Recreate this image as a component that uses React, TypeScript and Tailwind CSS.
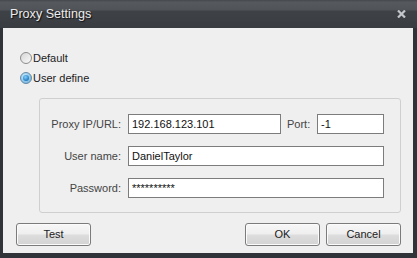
import React from "react";

// ── Radio ───────────────────────────────────────────────────────────────────

function Radio({ checked }: { checked: boolean }) {
  return (
    <svg width={12} height={12} viewBox="0 0 12 12" className="shrink-0">
      <defs>
        <linearGradient id="rOff" x1="0" y1="0" x2="1" y2="1">
          <stop offset="0" stopColor="#d4d4d4" />
          <stop offset="1" stopColor="#fbfbfb" />
        </linearGradient>
        <radialGradient id="rOn" cx="0.4" cy="0.35" r="0.7">
          <stop offset="0" stopColor="#c9ecff" />
          <stop offset="1" stopColor="#6fb3e0" />
        </radialGradient>
        <radialGradient id="rDot" cx="0.4" cy="0.35" r="0.7">
          <stop offset="0" stopColor="#7fd0ff" />
          <stop offset="1" stopColor="#1d6fb3" />
        </radialGradient>
      </defs>
      <circle cx="6" cy="6" r="5.5" fill={checked ? "url(#rOn)" : "url(#rOff)"} stroke={checked ? "#6a8aa2" : "#8c8c8c"} />
      {checked && <circle cx="6" cy="6" r="3" fill="url(#rDot)" />}
    </svg>
  );
}

// ── Button ──────────────────────────────────────────────────────────────────

function Btn({ label }: { label: string }) {
  return (
    <button className="w-[75px] h-[23px] rounded-[3px] border border-[#7b7b7b] bg-[linear-gradient(to_bottom,#f7f7f7_0%,#efefef_45%,#dcdcdc_55%,#d3d3d3_100%)] shadow-[inset_0_0_0_1px_#fbfbfb] text-[11px] text-[#222]">
      {label}
    </button>
  );
}

function Field({ value, w }: { value: string; w: string }) {
  return (
    <div className={`${w} h-[20px] bg-white border border-[#7c7c7c] flex items-center px-[3px] text-[11px] text-[#111]`}>
      {value}
    </div>
  );
}

export default function App() {
  return (
    <div
      className="w-[417px] h-[258px] flex flex-col bg-[#303338]"
      style={{ fontFamily: '"Liberation Sans", Tahoma, Arial, sans-serif' }}
    >
      {/* Title bar */}
      <div className="h-[28px] flex items-center justify-between pl-[10px] pr-[11px] bg-[linear-gradient(to_bottom,#45484d_0%,#56595e_8%,#505358_35%,#3e4146_40%,#393c41_100%)]">
        <span className="text-[12.6px] text-[#ececec] [text-shadow:1px_1px_1px_#111]">Proxy Settings</span>
        <svg width={9} height={8} viewBox="0 0 9 8">
          <path d="M1 0.5 L8 7.5 M8 0.5 L1 7.5" stroke="#c3c7cc" strokeWidth={2.2} />
        </svg>
      </div>

      {/* Content */}
      <div className="flex-1 ml-[3px] mr-[4px] mb-[5px] bg-[#efefef] flex flex-col pt-[24px] text-[11px]">
        <div className="flex flex-col gap-[6px] pl-[17px] text-[#222]">
          <label className="flex items-center gap-[1px] h-[12px]">
            <Radio checked={false} />
            <span>Default</span>
          </label>
          <label className="flex items-center gap-[1px] h-[12px] mt-[2px]">
            <Radio checked />
            <span>User define</span>
          </label>
        </div>

        {/* Group */}
        <div className="ml-[36px] mr-[12px] mt-[14px] h-[115px] border border-[#cfcfcf] rounded-[3px] flex flex-col gap-[12px] pt-[15px] text-[#444]">
          <div className="flex items-center">
            <span className="w-[81px] text-right">Proxy IP/URL:</span>
            <div className="ml-[7px]">
              <Field value="192.168.123.101" w="w-[153px]" />
            </div>
            <span className="ml-[6px] w-[30px]">Port:</span>
            <Field value="-1" w="w-[67px]" />
          </div>
          <div className="flex items-center">
            <span className="w-[81px] text-right">User name:</span>
            <div className="ml-[7px]">
              <Field value="DanielTaylor" w="w-[256px]" />
            </div>
          </div>
          <div className="flex items-center">
            <span className="w-[81px] text-right">Password:</span>
            <div className="ml-[7px]">
              <Field value="**********" w="w-[256px]" />
            </div>
          </div>
        </div>

        {/* Buttons */}
        <div className="flex items-center mt-[10px] pl-[13px] pr-[12px]">
          <Btn label="Test" />
          <div className="flex-1" />
          <div className="flex gap-[6px]">
            <Btn label="OK" />
            <Btn label="Cancel" />
          </div>
        </div>
      </div>
    </div>
  );
}
